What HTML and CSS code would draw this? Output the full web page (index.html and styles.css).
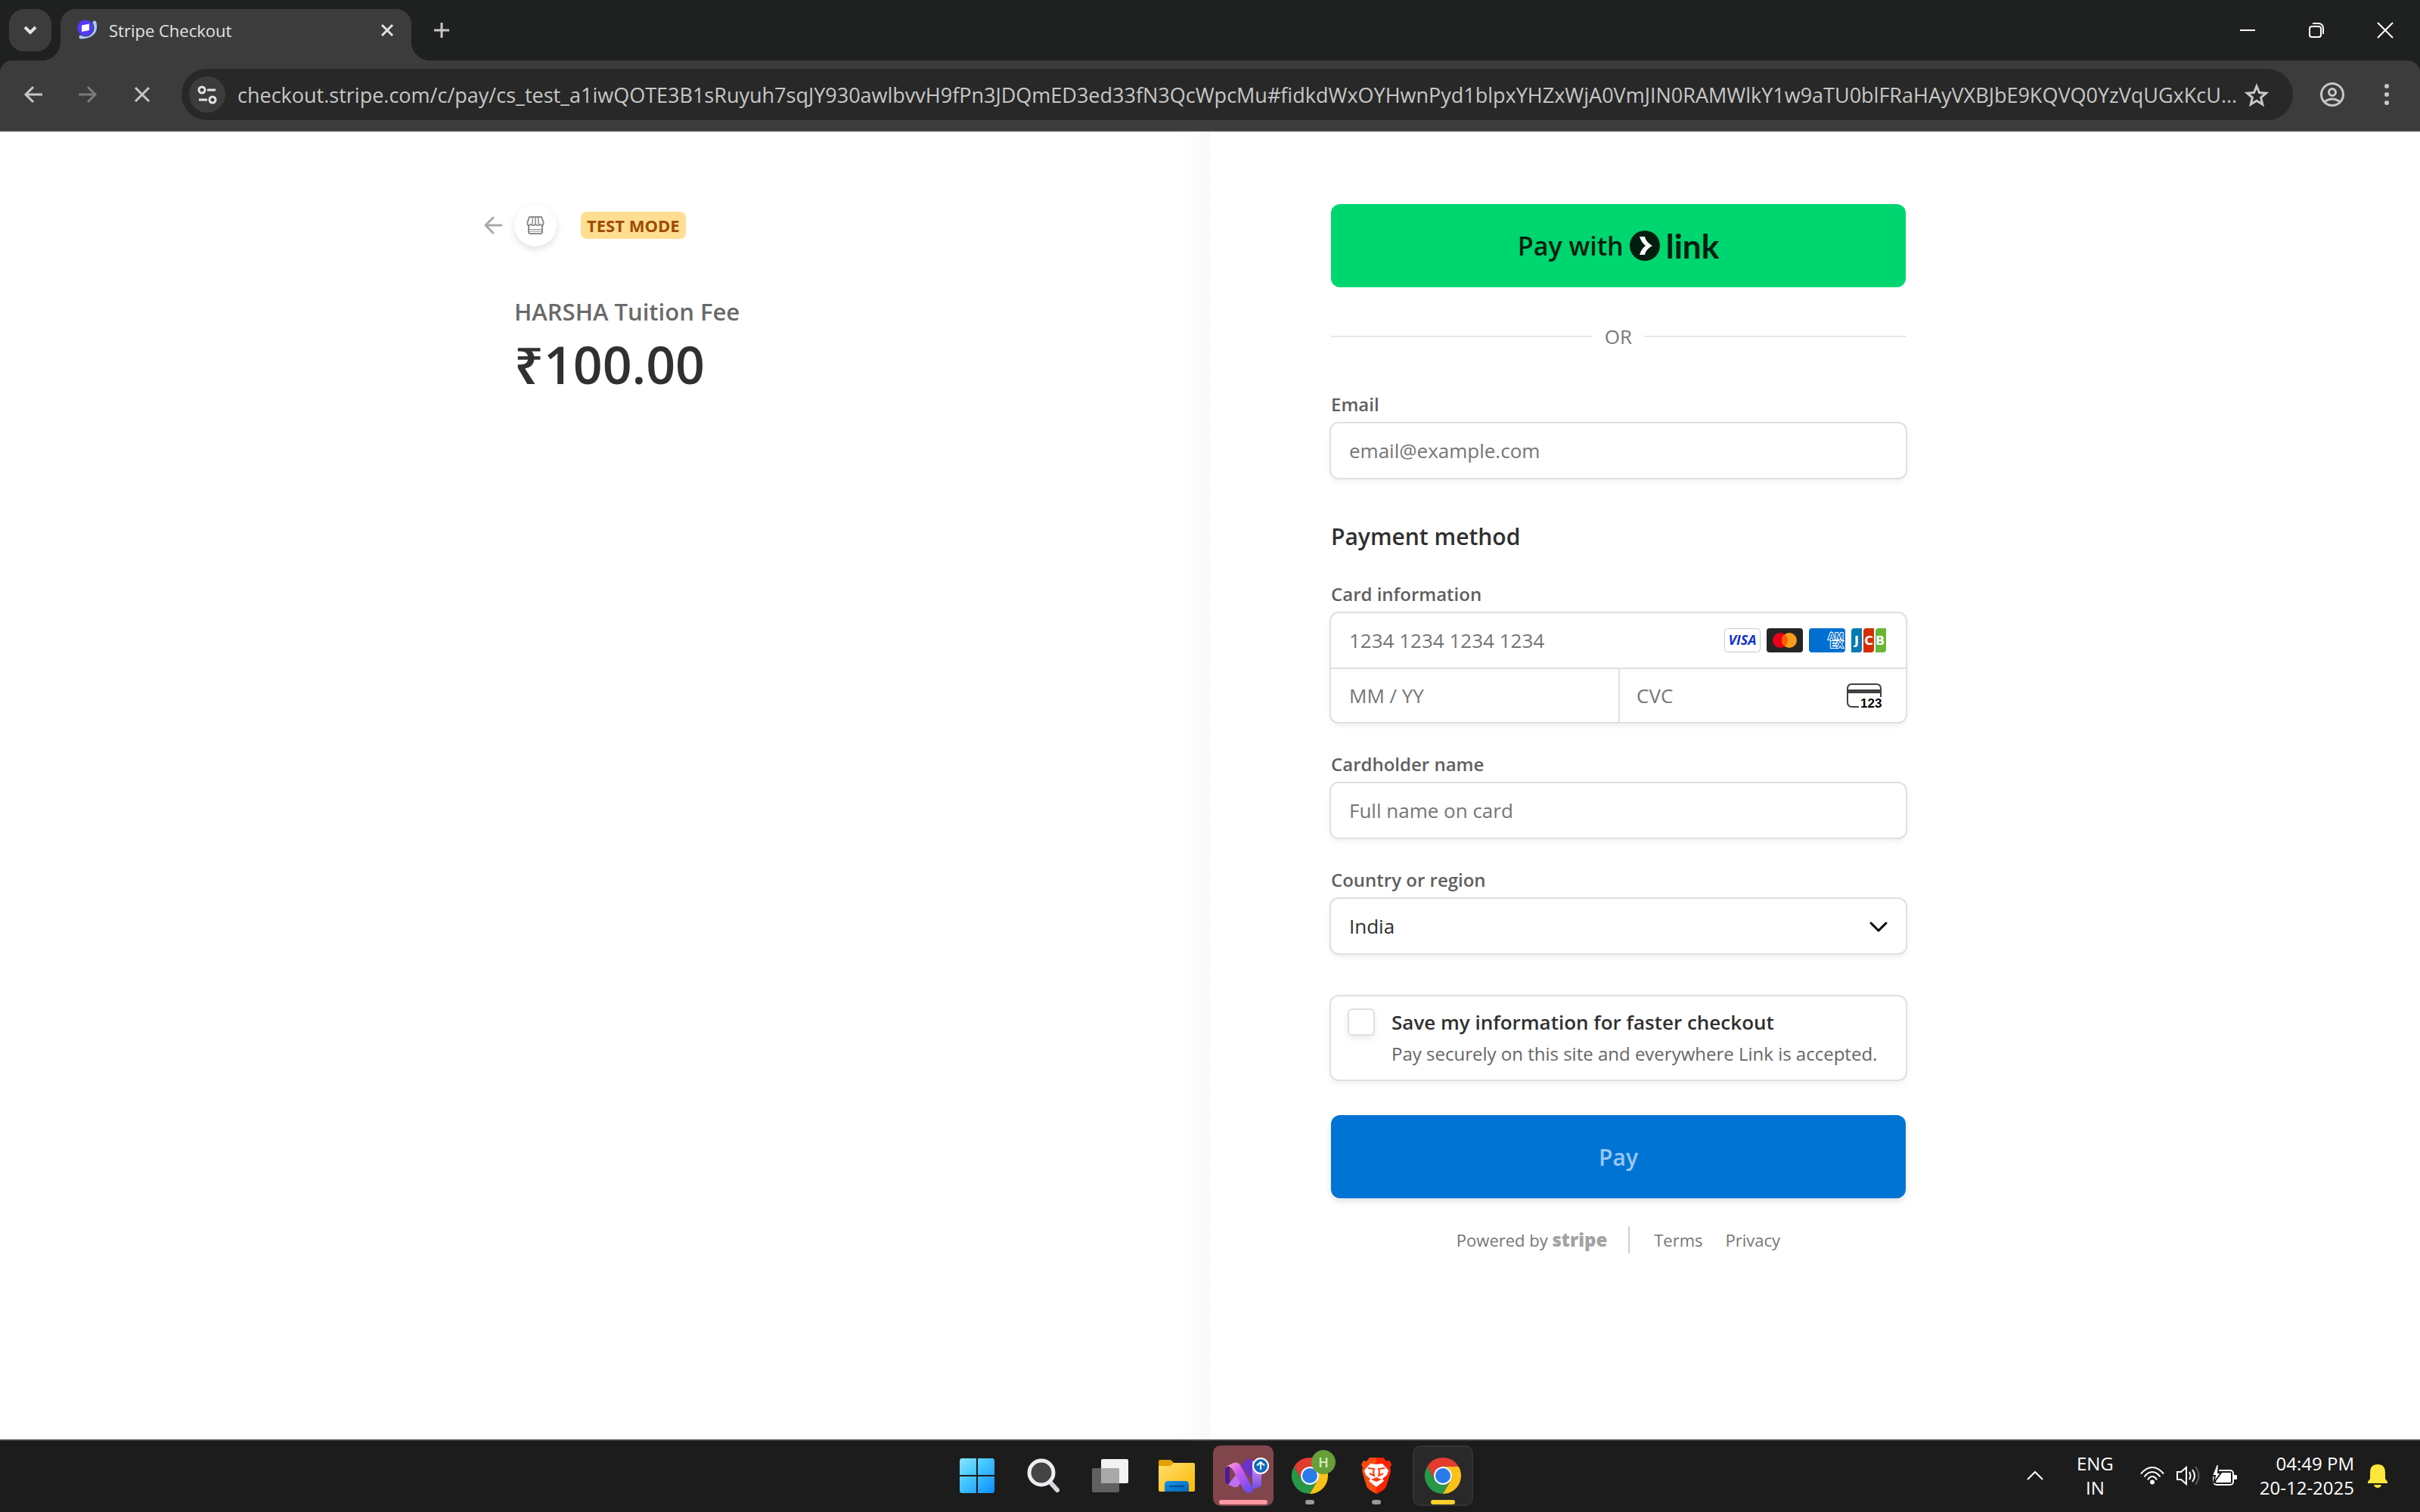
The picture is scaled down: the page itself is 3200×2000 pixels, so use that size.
FILE: index.html
```html
<!DOCTYPE html>
<html lang="en">
<head>
  <meta charset="utf-8">
  <title>Stripe Checkout</title>
  <link rel="stylesheet" href="styles.css">
</head>
<body>
  <header class="browser">
    <div class="tabs">
      <button class="tab-search" aria-label="Search tabs">
        <svg width="18" height="14" viewBox="0 0 18 14"><path d="M2 3l7 7 7-7" fill="none" stroke="#e3e3e3" stroke-width="4"/></svg>
      </button>
      <div class="tab">
        <svg width="28" height="28" viewBox="0 0 28 28">
          <path d="M23 4q4 18-18 19" fill="none" stroke="#a8c7fa" stroke-width="5" stroke-linecap="round"/>
          <circle cx="11" cy="11" r="11" fill="#533afd" stroke="#3c3c3c" stroke-width="1"/>
          <path d="M6 7.500l10-2v8.500l-10 2z" fill="#fff"/>
        </svg>
        <span class="tab-title">Stripe Checkout</span>
        <button class="icon-btn" aria-label="Close tab">
          <svg width="18" height="18" viewBox="0 0 18 18"><path d="M2 2l14 14M16 2L2 16" stroke="#e3e3e3" stroke-width="3"/></svg>
        </button>
      </div>
      <button class="icon-btn new-tab" aria-label="New tab">
        <svg width="20" height="20" viewBox="0 0 20 20"><path d="M10 0v20M0 10h20" stroke="#c7c7c7" stroke-width="3"/></svg>
      </button>
      <div class="window-buttons">
        <button class="icon-btn" aria-label="Minimize">
          <svg width="20" height="20" viewBox="0 0 20 20"><path d="M0 10h20" stroke="#fff" stroke-width="2"/></svg>
        </button>
        <button class="icon-btn" aria-label="Restore">
          <svg width="20" height="20" viewBox="0 0 20 20" fill="none" stroke="#fff" stroke-width="2"><rect x="1" y="5" width="15" height="14" rx="3"/><path d="M5 1h8a6 6 0 0 1 6 6v8"/></svg>
        </button>
        <button class="icon-btn" aria-label="Close">
          <svg width="20" height="20" viewBox="0 0 20 20"><path d="M0 0l20 20M20 0L0 20" stroke="#fff" stroke-width="2"/></svg>
        </button>
      </div>
    </div>
    <div class="toolbar">
      <button class="icon-btn" aria-label="Back">
        <svg width="24" height="24" viewBox="0 0 24 24"><path d="M12 2L2 12l10 10M2 12h22" fill="none" stroke="#c7c7c7" stroke-width="3"/></svg>
      </button>
      <button class="icon-btn" aria-label="Forward">
        <svg width="24" height="24" viewBox="0 0 24 24"><path d="M12 2l10 10-10 10M22 12H0" fill="none" stroke="#7b7b7b" stroke-width="3"/></svg>
      </button>
      <button class="icon-btn" aria-label="Stop">
        <svg width="20" height="20" viewBox="0 0 20 20"><path d="M1 1l18 18M19 1L1 19" stroke="#c7c7c7" stroke-width="3"/></svg>
      </button>
      <div class="omnibox">
        <button class="site-info" aria-label="Site information">
          <svg width="26" height="24" viewBox="0 0 26 24" fill="none" stroke="#e3e3e3" stroke-width="3"><circle cx="6" cy="6" r="4"/><path d="M13 6h11M2 19h11"/><circle cx="20" cy="19" r="4"/></svg>
        </button>
        <input class="url" type="text" aria-label="Address" value="checkout.stripe.com/c/pay/cs_test_a1iwQOTE3B1sRuyuh7sqJY930awlbvvH9fPn3JDQmED3ed33fN3QcWpcMu#fidkdWxOYHwnPyd1blpxYHZxWjA0VmJIN0RAMWlkY1w9aTU0blFRaHAyVXBJbE9KQVQ0YzVqUGxKcU...">
        <button class="icon-btn" aria-label="Bookmark">
          <svg width="32" height="30" viewBox="0 0 32 30"><path d="M16 4l3.500 8.500 9 .7-6.900 5.900 2.200 8.900-7.800-4.800-7.800 4.800 2.200-8.900-6.900-5.900 9-.7z" fill="none" stroke="#c7c7c7" stroke-width="3"/></svg>
        </button>
      </div>
      <button class="icon-btn profile" aria-label="Profile">
        <svg width="34" height="34" viewBox="0 0 34 34" fill="none" stroke="#c7c7c7" stroke-width="3"><circle cx="17" cy="17" r="14.500"/><circle cx="17" cy="14" r="4.500"/><path d="M7 27c5-5.500 15-5.500 20 0"/></svg>
      </button>
      <button class="icon-btn" aria-label="Menu">
        <svg width="8" height="28" viewBox="0 0 8 28" fill="#c7c7c7"><circle cx="4" cy="3" r="3"/><circle cx="4" cy="14" r="3"/><circle cx="4" cy="25" r="3"/></svg>
      </button>
    </div>
  </header>

  <main class="checkout">
    <section class="summary">
      <div class="content">
        <div class="business">
          <a href="#" class="back" aria-label="Back">
            <svg width="24" height="24" viewBox="0 0 24 24"><path d="M12 2L2 12l10 10M2 12h21" fill="none" stroke="#a9a9a9" stroke-width="3" stroke-linecap="round" stroke-linejoin="round"/></svg>
          </a>
          <span class="store">
            <svg width="24" height="24" viewBox="0 0 24 24" fill="none" stroke="#8c8c8c" stroke-width="2"><path d="M4 1h16l2.500 7v2q0 2-2 2T18 10q-.5 2-3 2t-3-2q-.5 2-3 2t-3-2q-.5 2-2.500 2t-2-2V8z"/><path d="M8.500 1L8 10M12 1v9M15.500 1l.5 9" stroke-width="1.500"/><path d="M3 12v9q0 2 2 2h14q2 0 2-2v-9"/><path d="M3 17.500h18M3 20h18" stroke-width="1.200"/></svg>
          </span>
          <span class="badge">TEST MODE</span>
        </div>
        <h1 class="product">HARSHA Tuition Fee</h1>
        <p class="amount">₹100.00</p>
      </div>
    </section>

    <section class="payment">
      <form class="content" onsubmit="return false">
        <button class="btn link-btn" type="button">
          <span>Pay with</span>
          <svg width="40" height="40" viewBox="0 0 40 40"><circle cx="20" cy="20" r="20" fill="#011e0f"/><path d="M13 8h7c1 5 4 8.500 10 12-6 3.500-9 7-10 12h-7c1.500-5 4-9 8-12-4-3-6.500-7-8-12z" fill="#fff"/></svg>
          <span class="link-name">link</span>
        </button>
        <div class="divider">OR</div>

        <div class="field email">
          <label for="email">Email</label>
          <input class="box" type="email" id="email" placeholder="email@example.com">
        </div>

        <h2>Payment method</h2>

        <div class="field">
          <label for="number">Card information</label>
          <div class="box card">
            <div class="card-row">
              <input type="text" id="number" placeholder="1234 1234 1234 1234">
              <div class="brands">
                <svg width="48" height="32" viewBox="0 0 48 32"><rect x=".5" y=".5" width="47" height="31" rx="4" fill="#fff" stroke="#c9c9c9"/><text class="visa" x="24" y="22" text-anchor="middle">VISA</text></svg>
                <svg width="48" height="32" viewBox="0 0 48 32"><rect width="48" height="32" rx="4" fill="#252525"/><circle cx="18" cy="16" r="10" fill="#eb001b"/><circle cx="30" cy="16" r="10" fill="#f79e1b"/><path d="M24 8a10 10 0 0 1 0 16 10 10 0 0 1 0-16z" fill="#ff5f00"/></svg>
                <svg width="48" height="32" viewBox="0 0 48 32"><rect width="48" height="32" rx="4" fill="#016fd0"/><g class="amex"><text x="25" y="15">AM</text><text x="28" y="26">EX</text></g></svg>
                <svg width="46" height="32" viewBox="0 0 46 32"><path d="M4 0h10v28q0 4-4 4H0V4q0-4 4-4z" fill="#047ab1"/><path d="M20 0h10v28q0 4-4 4H16V4q0-4 4-4z" fill="#d42d06"/><path d="M36 0h10v28q0 4-4 4H32V4q0-4 4-4z" fill="#67b637"/><g class="jcb"><text x="7" y="22">J</text><text x="23" y="22">C</text><text x="38" y="22">B</text></g></svg>
              </div>
            </div>
            <div class="card-row split">
              <input type="text" placeholder="MM / YY" aria-label="Expiration">
              <div class="cvc">
                <input type="text" placeholder="CVC" aria-label="CVC">
                <svg width="48" height="40" viewBox="0 -4 48 40"><path d="M16 31H7q-6 0-6-6V7q0-6 6-6h32q6 0 6 6v11" fill="none" stroke="#404040" stroke-width="2"/><path d="M1 8h44v5H1z" fill="#404040"/><text class="digits" x="18" y="32">123</text></svg>
              </div>
            </div>
          </div>
        </div>

        <div class="field">
          <label for="name">Cardholder name</label>
          <input class="box" type="text" id="name" placeholder="Full name on card">
        </div>

        <div class="field">
          <label for="country">Country or region</label>
          <div class="select-wrap">
            <select class="box" id="country">
              <option>India</option>
            </select>
            <svg width="24" height="14" viewBox="0 0 24 14"><path d="M2 2l10 10L22 2" fill="none" stroke="#000" stroke-width="3" stroke-linecap="round" stroke-linejoin="round"/></svg>
          </div>
        </div>

        <label class="save box">
          <input type="checkbox">
          <span class="save-text">
            <strong>Save my information for faster checkout</strong>
            <span>Pay securely on this site and everywhere Link is accepted.</span>
          </span>
        </label>

        <button class="btn pay-btn" type="submit">Pay</button>

        <footer class="footer">
          <a href="#" class="powered">Powered by <b>stripe</b></a>
          <nav>
            <a href="#">Terms</a>
            <a href="#">Privacy</a>
          </nav>
        </footer>
      </form>
    </section>
  </main>

  <footer class="taskbar">
    <div class="apps">
      <button class="app" aria-label="Start">
        <svg width="46" height="46" viewBox="0 0 46 46">
          <defs><linearGradient id="win" x1="0" y1="0" x2="46" y2="46" gradientUnits="userSpaceOnUse"><stop offset="0" stop-color="#8be2ff"/><stop offset=".4" stop-color="#48c8ff"/><stop offset="1" stop-color="#0a8fff"/></linearGradient></defs>
          <path d="M2 0h20v22H0V2zM24 0h20l2 2v20H24zM0 24h22v22H2l-2-2zM24 24h22v20l-2 2H24z" fill="url(#win)"/>
        </svg>
      </button>
      <button class="app" aria-label="Search">
        <svg width="46" height="46" viewBox="0 0 46 46"><path d="M32 32l9 10" stroke="#d3d6dd" stroke-width="6" stroke-linecap="round"/><circle cx="20" cy="19" r="16" fill="#444" stroke="#eceef1" stroke-width="5"/></svg>
      </button>
      <button class="app" aria-label="Task view">
        <svg width="48" height="44" viewBox="0 0 48 44"><rect x="12" width="36" height="32" rx="2" fill="#f2f2f2"/><rect y="12" width="36" height="32" rx="2" fill="#606060"/><path d="M12 12h24v20H12z" fill="#a9a9a9"/></svg>
      </button>
      <button class="app" aria-label="File Explorer">
        <svg width="48" height="42" viewBox="0 0 48 42">
          <defs><linearGradient id="folder" x1="0" y1="0" x2="1" y2="1"><stop offset="0" stop-color="#ffdf70"/><stop offset="1" stop-color="#fbb800"/></linearGradient><linearGradient id="clip" x1="0" y1="0" x2="1" y2="1"><stop offset="0" stop-color="#1793e6"/><stop offset="1" stop-color="#0364b8"/></linearGradient></defs>
          <path d="M0 10V2q0-2 2-2h13q2 0 5 4l2 6z" fill="#e1a000"/>
          <path d="M0 8h14q3 0 6-4h26q2 0 2 2v34q0 2-2 2H2q-2 0-2-2z" fill="url(#folder)"/>
          <path d="M8 42V33q0-5 5-5h22q5 0 5 5v9z" fill="url(#clip)"/><path d="M15 35h18" stroke="#0a4a8c" stroke-width="2" stroke-linecap="round"/>
        </svg>
      </button>
      <button class="app attention" aria-label="Visual Studio">
        <svg width="48" height="48" viewBox="0 0 48 48">
          <defs><linearGradient id="vs1" x1="0" y1="0" x2=".8" y2="1"><stop offset="0" stop-color="#ffb0c4"/><stop offset=".4" stop-color="#d05cf5"/><stop offset="1" stop-color="#6b4bf0"/></linearGradient><linearGradient id="vs2" x1="0" y1="0" x2="0" y2="1"><stop offset="0" stop-color="#f59ce8"/><stop offset="1" stop-color="#6d4be8"/></linearGradient></defs>
          <path d="M0 14l6-3v26l-4-3q-2-1-2-4z" fill="#4c1a96"/>
          <path d="M4 36l10-13 7 10-4 5q-2 2-5 1z" fill="#c070ee"/>
          <path d="M14 18L27 4q4-4 9-1v25l-7-6-8-12z" fill="#6b32cc"/>
          <path d="M36 4l12 8v23q0 3-3 4l-9 3z" fill="url(#vs2)"/>
          <path d="M1 12l10-5q6-2 9 3l16 30v5q-6 4-11-2L10 16q-4-6-9-4z" fill="url(#vs1)"/>
          <circle cx="47" cy="11" r="10" fill="#0f6cbd" stroke="#fff" stroke-width="2"/>
          <path d="M47 16V6M42 10.500L47 6l5 4.500" fill="none" stroke="#fff" stroke-width="2"/>
        </svg>
      </button>
      <button class="app running" aria-label="Chrome profile H">
        <svg width="48" height="48" viewBox="0 0 48 48">
          <defs><g id="chrome"><path d="M24 12h20.780A24 24 0 0 0 3.210 12L13.600 30A12 12 0 0 1 24 12z" fill="#e33b2e"/><path d="M34.390 30L24 48A24 24 0 0 1 3.210 12L13.600 30A12 12 0 0 0 34.390 30z" fill="#279847"/><path d="M34.390 30L24 48A24 24 0 0 0 44.780 12H24A12 12 0 0 1 34.390 30z" fill="#fbc116"/><circle cx="24" cy="24" r="12" fill="#fff"/><circle cx="24" cy="24" r="10" fill="#2a7bea"/></g></defs>
          <use href="#chrome"/>
        </svg>
        <span class="profile-badge">H</span>
      </button>
      <button class="app running" aria-label="Brave">
        <svg width="42" height="48" viewBox="0 0 42 48">
          <path d="M12 0h18l4 5 4-1 3 5-2 4 1 5-6 20q-1 4-13 10Q9 42 8 38L2 18l1-5-2-4 3-5 4 1z" fill="#fb4a12"/>
          <path d="M21 0h9l4 5 4-1 3 5-2 4 1 5-6 20q-1 4-13 10z" fill="#ff2200"/>
          <path d="M13 8l8 1 8-1 8 9-2 6-6 5 2 3-10 8-10-8 2-3-6-5-2-6z" fill="#fff"/>
          <path d="M10 14l8 1-1 4 1 5-6-3M32 14l-8 1 1 4-1 5 6-3" fill="none" stroke="#fb3a0c" stroke-width="2"/><path d="M14 29l7-3 7 3-7 3z" fill="#fb3a0c"/>
        </svg>
      </button>
      <button class="app active" aria-label="Chrome">
        <svg width="48" height="48" viewBox="0 0 48 48"><use href="#chrome"/></svg>
      </button>
    </div>
    <div class="tray">
      <button class="icon-btn" aria-label="Show hidden icons">
        <svg width="24" height="14" viewBox="0 0 24 14"><path d="M2 12L12 2l10 10" fill="none" stroke="#fff" stroke-width="2"/></svg>
      </button>
      <div class="lang">ENG<br>IN</div>
      <div class="status">
        <svg width="32" height="24" viewBox="0 0 32 24" fill="none" stroke="#fff" stroke-width="2"><path d="M1 9.500Q8 1 16 1t15 8.500M5.500 13.500Q10 7 16 7t10.500 6.500M10 17.500q2.500-4.500 6-4.500t6 4.500"/><circle cx="16" cy="20.500" r="2" fill="#fff"/></svg>
        <svg width="32" height="28" viewBox="0 0 32 28" fill="none" stroke="#fff" stroke-width="2"><path d="M1 9h5l7-6v22l-7-6H1zM17 9q3 5 0 10M21 6q6 8 0 16"/><path d="M25 2q9 12 0 24" stroke="#5a5a5a"/></svg>
        <svg width="32" height="28" viewBox="0 0 32 28"><rect x="1" y="7" width="26" height="19" rx="4" fill="none" stroke="#fff" stroke-width="2"/><path d="M9 10h14q1 0 1 1v11q0 1-1 1H4v-4z" fill="#fff"/><path d="M28 13h3q1 0 1 1v4q0 1-1 1h-3z" fill="#fff"/><path d="M5-1L-1 14h4L1 24l10-14H7l1-11z" fill="#fff" stroke="#1c1c1c" stroke-width="2"/></svg>
      </div>
      <div class="clock">04:49 PM<br>20-12-2025</div>
      <svg width="26" height="32" viewBox="0 0 26 32" fill="#ffe63b"><path d="M13 1q10 0 10 11v8l3 4v2H0v-2l3-4v-8Q3 1 13 1zM8 28h10q-1 4-5 4t-5-4z"/></svg>
    </div>
  </footer>
</body>
</html>
```
FILE: styles.css
```css
* {
  box-sizing: border-box;
}

body {
  margin: 0;
  min-height: 100vh;
  display: flex;
  flex-direction: column;
  font-family: "Open Sans", "Noto Sans", sans-serif;
  font-size: 26px;
  color: #303030;
  background-color: #fff;
}

button,
input,
select {
  font-family: inherit;
  font-size: inherit;
  color: inherit;
  border: none;
  outline: none;
  margin: 0;
  padding: 0;
  background: none;
}

svg {
  display: block;
  flex-shrink: 0;
  overflow: visible;
}

a {
  color: inherit;
  text-decoration: none;
}

.icon-btn {
  display: flex;
  align-items: center;
  justify-content: center;
  width: 48px;
  height: 48px;
}

/* browser */
.browser {
  background-color: #1f2120;
}

.tabs {
  display: flex;
  align-items: center;
  height: 80px;
  padding: 0 22px 0 12px;
}

.tab-search {
  display: flex;
  align-items: center;
  justify-content: center;
  width: 56px;
  height: 56px;
  border-radius: 20px;
  background-color: #3c3c3c;
}

.tab {
  position: relative;
  display: flex;
  align-items: center;
  align-self: flex-end;
  width: 464px;
  height: 68px;
  margin-left: 12px;
  padding: 0 8px 12px 22px;
  border-radius: 20px 20px 0 0;
  background-color: #3c3c3c;
}

.tab::before,
.tab::after {
  content: "";
  position: absolute;
  bottom: 0;
  width: 24px;
  height: 24px;
}

.tab::before {
  left: -24px;
  background: radial-gradient(circle at 0 0, transparent 24px, #3c3c3c 24px);
}

.tab::after {
  right: -24px;
  background: radial-gradient(circle at 100% 0, transparent 24px, #3c3c3c 24px);
}

.tab-title {
  flex: 1;
  margin-left: 14px;
  font-size: 22px;
  color: #e3e3e3;
}

.new-tab {
  margin-left: 16px;
}

.window-buttons {
  display: flex;
  gap: 43px;
  margin-left: auto;
}

.toolbar {
  display: flex;
  align-items: center;
  height: 94px;
  padding: 0 20px 2px;
  border-bottom: 2px solid #4a4a4a;
  border-radius: 16px 16px 0 0;
  background-color: #3c3c3c;
  gap: 24px;
}

.omnibox {
  flex: 1;
  display: flex;
  align-items: center;
  height: 68px;
  margin-left: 4px;
  padding: 0 24px 0 10px;
  border-radius: 34px;
  background-color: #282828;
}

.site-info {
  display: flex;
  align-items: center;
  justify-content: center;
  width: 48px;
  height: 48px;
  border-radius: 24px;
  background-color: #3c3c3c;
}

.url {
  flex: 1;
  min-width: 0;
  margin-left: 16px;
  font-size: 27px;
  color: #c7c7c7;
}

.profile {
  margin-left: 4px;
}

/* checkout */
.checkout {
  flex: 1;
  display: grid;
  grid-template-columns: 1fr 1fr;
}

.summary,
.payment {
  display: flex;
  padding: 96px 160px;
}

.summary {
  justify-content: flex-end;
  background: linear-gradient(to left, #f9f9f9, #fff 40px);
}

.content {
  width: 100%;
  max-width: 760px;
}

.business {
  display: flex;
  align-items: center;
  margin-left: -40px;
}

.store {
  display: flex;
  align-items: center;
  justify-content: center;
  width: 56px;
  height: 56px;
  margin: 0 32px 0 16px;
  border-radius: 50%;
  box-shadow: 0 4px 10px rgba(0, 0, 0, 0.12);
}

.badge {
  padding: 0 8px;
  border-radius: 8px;
  background-color: #ffde92;
  color: #a04b00;
  font-size: 22px;
  font-weight: bold;
  line-height: 36px;
}

.product {
  margin: 66px 0 0;
  font-size: 31px;
  font-weight: 600;
  line-height: 40px;
  color: #6a6a6a;
}

.amount {
  margin: 8px 0 0;
  font-size: 68px;
  font-weight: 600;
  line-height: 84px;
}

.btn {
  display: flex;
  align-items: center;
  justify-content: center;
  width: 100%;
  height: 110px;
  border-radius: 12px;
}

.link-btn {
  gap: 8px;
  background-color: #00d66f;
  color: #011e0f;
  font-size: 34px;
  font-weight: 600;
}

.link-name {
  font-family: Lato, sans-serif;
  font-size: 44px;
  font-weight: 700;
  line-height: 44px;
}

.divider {
  display: flex;
  align-items: center;
  gap: 16px;
  height: 42px;
  margin-top: 44px;
  color: #7a7a7a;
}

.divider::before,
.divider::after {
  content: "";
  flex: 1;
  height: 2px;
  background-color: #e6e6e6;
}

.field {
  margin-top: 39px;
}

.email {
  margin-top: 52px;
}

.field label {
  display: block;
  margin-bottom: 8px;
  font-size: 24px;
  font-weight: 600;
  line-height: 34px;
  color: #5f5f5f;
}

.box {
  display: block;
  width: 100%;
  height: 72px;
  padding: 0 24px;
  border-radius: 10px;
  background-color: #fff;
  box-shadow: 0 0 0 2px #e0e0e0, 0 4px 8px rgba(0, 0, 0, 0.08);
}

::placeholder {
  color: #757575;
  opacity: 1;
}

h2 {
  margin: 58px 0 0;
  font-size: 30px;
  font-weight: 600;
  line-height: 40px;
}

.card {
  height: auto;
  padding: 0;
}

.card-row {
  display: flex;
  align-items: center;
  height: 72px;
  padding: 0 26px 0 24px;
}

.card-row input {
  flex: 1;
  min-width: 0;
  height: 70px;
}

.brands {
  display: flex;
  gap: 8px;
}

.visa {
  font: italic bold 18px "Open Sans", sans-serif;
  fill: #1434cb;
}

.amex {
  font: bold 13px "Liberation Sans", sans-serif;
  fill: #016fd0;
  stroke: #fff;
  stroke-width: 2px;
  paint-order: stroke;
}

.jcb {
  font: bold 16px "DejaVu Sans", sans-serif;
  fill: #fff;
  text-anchor: middle;
}

.card .split {
  display: grid;
  grid-template-columns: minmax(0, 1fr) minmax(0, 1fr);
  border-top: 2px solid #e0e0e0;
  padding: 0;
}

.split > input {
  width: 100%;
  padding-left: 24px;
}

.cvc {
  display: flex;
  align-items: center;
  border-left: 2px solid #e0e0e0;
  padding: 0 30px 0 22px;
}

.digits {
  font: bold 17px "Liberation Sans", sans-serif;
}

.select-wrap {
  position: relative;
}

.select-wrap select {
  appearance: none;
}

.select-wrap svg {
  position: absolute;
  right: 24px;
  top: 30px;
  pointer-events: none;
}

.save {
  display: flex;
  gap: 22px;
  height: auto;
  margin-top: 57px;
  padding: 16px 22px;
}

.save input {
  appearance: none;
  width: 36px;
  height: 36px;
  border: 2px solid #e0e0e0;
  border-radius: 6px;
  box-shadow: 0 4px 8px rgba(0, 0, 0, 0.08);
}

.save-text {
  display: flex;
  flex-direction: column;
  gap: 6px;
  font-size: 24px;
  line-height: 36px;
  color: #666;
}

.save-text strong {
  font-size: 26px;
  font-weight: 600;
  color: #303030;
}

.pay-btn {
  margin-top: 47px;
  background-color: #0074d4;
  box-shadow: 0 4px 8px rgba(0, 0, 0, 0.12);
  color: #99c7ee;
  font-size: 30px;
  font-weight: 600;
}

.footer {
  display: flex;
  justify-content: center;
  margin-top: 37px;
  font-size: 22px;
  line-height: 36px;
  color: #767676;
}

.powered {
  padding-right: 28px;
  border-right: 2px solid #d0d0d0;
}

.powered b {
  font-size: 24px;
  font-weight: 800;
  line-height: 24px;
  color: #a3a3a3;
}

.footer nav {
  display: flex;
  gap: 30px;
  padding-left: 32px;
}

/* taskbar */
.taskbar {
  display: grid;
  grid-template-columns: 1fr auto 1fr;
  align-items: center;
  height: 96px;
  padding-bottom: 2px;
  border-top: 2px solid #444;
  background-color: #1c1c1c;
  color: #fff;
}

.apps {
  grid-column: 2;
  display: flex;
  gap: 8px;
}

.app {
  position: relative;
  display: flex;
  align-items: center;
  justify-content: center;
  width: 80px;
  height: 80px;
  border-radius: 10px;
}

.attention {
  background-color: #81464b;
}

.active {
  background-color: #292929;
  border: 2px solid #333;
}

.attention::after,
.running::after,
.active::after {
  content: "";
  position: absolute;
  bottom: 2px;
  width: 12px;
  height: 6px;
  border-radius: 3px;
  background-color: #9a9a9a;
}

.attention::after {
  width: 64px;
  background-color: #ff99a4;
}

.active::after {
  bottom: 0;
  width: 32px;
  background-color: #ffd02b;
}

.profile-badge {
  position: absolute;
  top: 6px;
  right: 6px;
  width: 32px;
  height: 32px;
  border-radius: 50%;
  background-color: #689f38;
  color: #dcedc8;
  font-size: 18px;
  font-weight: 600;
  line-height: 32px;
}

.tray {
  display: flex;
  align-items: center;
  justify-content: flex-end;
  padding-right: 43px;
  font-size: 24px;
  line-height: 32px;
}

.lang {
  margin: 0 35px 0 31px;
  text-align: center;
}

.status {
  display: flex;
  align-items: center;
  gap: 16px;
}

.clock {
  margin: 0 18px 0 30px;
  text-align: right;
}
```
